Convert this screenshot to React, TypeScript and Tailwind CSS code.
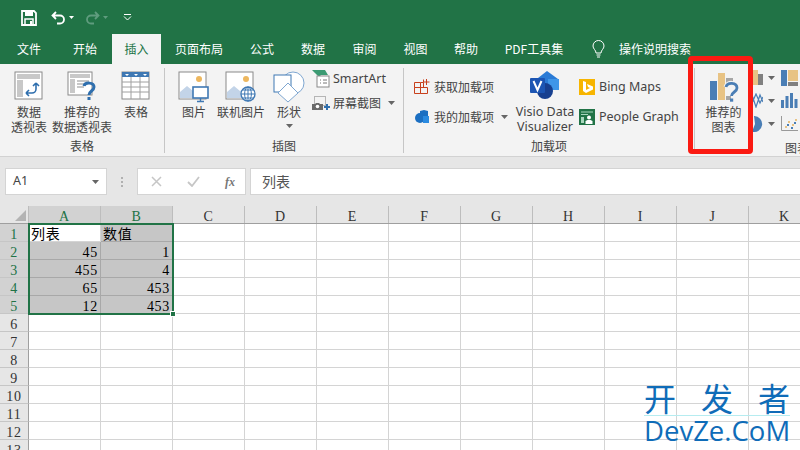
import type { ReactNode } from 'react';

const tabs = [
  { label: '文件', w: 'w-[58px]' },
  { label: '开始', w: 'w-[54px]' },
  { label: '插入', w: 'w-[49px]', active: true },
  { label: '页面布局', w: 'w-[76px]' },
  { label: '公式', w: 'w-[50px]' },
  { label: '数据', w: 'w-[52px]' },
  { label: '审阅', w: 'w-[51px]' },
  { label: '视图', w: 'w-[51px]' },
  { label: '帮助', w: 'w-[50px]' },
  { label: 'PDF工具集', w: 'w-[86px]' },
];

const columns = ['A', 'B', 'C', 'D', 'E', 'F', 'G', 'H', 'I', 'J', 'K'];

const rows: [string, string][] = [
  ['列表', '数值'],
  ['45', '1'],
  ['455', '4'],
  ['65', '453'],
  ['12', '453'],
];

function Caret({ className = '' }: { className?: string }) {
  return (
    <svg width="7" height="4" viewBox="0 0 7 4" className={className}>
      <path d="M0 0h7L3.500 4z" fill="#666" />
    </svg>
  );
}

function PivotIcon() {
  return (
    <svg width="30" height="30" viewBox="0 0 30 30">
      <rect x="1" y="1" width="27" height="27" fill="#fff" stroke="#8a8a8a" />
      <rect x="3" y="3" width="23" height="5" fill="#c8c8c8" />
      <rect x="3" y="9" width="6" height="17" fill="#c8c8c8" />
      <path d="M22 12v6a4 4 0 0 1-4 4h-6M12 22l3-3M12 22l3 3M22 12l-3 3M22 12l3 3" stroke="#2f6fae" strokeWidth="1.600" fill="none" />
    </svg>
  );
}

function RecommendPivotIcon() {
  return (
    <svg width="30" height="32" viewBox="0 0 30 32">
      <rect x="1" y="1" width="24" height="23" fill="#fff" stroke="#8a8a8a" />
      <rect x="3" y="3" width="20" height="4" fill="#c8c8c8" />
      <rect x="3" y="8" width="5" height="14" fill="#c8c8c8" />
      <path d="M10 10h12M10 13h9M10 16h7" stroke="#b5b5b5" strokeWidth="1.400" />
      <path d="M17 15c1-4 10-4 10 1 0 4-5 4-5 8" stroke="#2f6fae" strokeWidth="3" fill="none" />
      <rect x="20.500" y="26" width="3" height="3" fill="#2f6fae" />
    </svg>
  );
}

function TableIcon() {
  return (
    <svg width="30" height="30" viewBox="0 0 30 30">
      <rect x="1" y="1" width="27" height="27" fill="#fff" stroke="#8a8a8a" />
      <rect x="1" y="1" width="27" height="5" fill="#3f78b3" />
      <path d="M1 11h27M1 16h27M1 21h27M10 6v22M19 6v22" stroke="#a0a0a0" />
      <path d="M4 3h4l-2 2zM13 3h4l-2 2zM22 3h4l-2 2z" fill="#fff" />
    </svg>
  );
}

function PictureBase() {
  return (
    <>
      <rect x="1" y="1" width="27" height="27" fill="#fff" stroke="#8a8a8a" />
      <circle cx="21" cy="8" r="3" fill="#edb75f" />
      <path d="M2 27v-6l7-6 6 5 3-2 8 9z" fill="#c3d4e8" />
    </>
  );
}

function PictureIcon() {
  return (
    <svg width="32" height="32" viewBox="0 0 32 32">
      <PictureBase />
      <rect x="15" y="16" width="15" height="11" fill="#fff" stroke="#3f78b3" strokeWidth="1.600" />
      <path d="M22.500 27v3M19 30.500h7" stroke="#3f78b3" strokeWidth="1.400" />
    </svg>
  );
}

function OnlinePictureIcon() {
  return (
    <svg width="32" height="32" viewBox="0 0 32 32">
      <PictureBase />
      <circle cx="23" cy="23" r="7" fill="#fff" stroke="#3f78b3" strokeWidth="1.300" />
      <path d="M16 23h14M23 16v14M18 19h10M18 27h10" stroke="#3f78b3" />
      <ellipse cx="23" cy="23" rx="3.400" ry="7" fill="none" stroke="#3f78b3" />
    </svg>
  );
}

function ShapesIcon() {
  return (
    <svg width="32" height="32" viewBox="0 0 32 32">
      <circle cx="20" cy="12" r="11" fill="#fff" stroke="#7fa7d1" />
      <rect x="1" y="4" width="17" height="17" fill="#fff" stroke="#3f78b3" />
      <path d="M15 12l10 10-10 9-10-9z" fill="#fff" stroke="#7fa7d1" />
    </svg>
  );
}

function SmartArtIcon() {
  return (
    <svg width="18" height="18" viewBox="0 0 18 18">
      <path d="M0 0h13l3 5H9L7 7 3 3z" fill="#3c9a72" />
      <rect x="5" y="6" width="12" height="11" fill="#fff" stroke="#8a8a8a" />
      <path d="M8 10h1M11 10h4M8 13h1M11 13h4" stroke="#777" />
    </svg>
  );
}

function ScreenshotIcon() {
  return (
    <svg width="18" height="16" viewBox="0 0 18 16">
      <rect x="2.500" y="1.500" width="11" height="9" fill="none" stroke="#777" strokeDasharray="1 1" />
      <path d="M0 9h3l1-1h3l1 1h3v6H0z" fill="#6a6a6a" />
      <circle cx="5.500" cy="11.500" r="1.800" fill="#fff" />
      <path d="M15 9v6M12 12h6" stroke="#2f6fae" strokeWidth="2" />
    </svg>
  );
}

function StoreIcon() {
  return (
    <svg width="16" height="16" viewBox="0 0 16 16">
      <path d="M.5 3.500h6v5h-6zM.5 8.500h6v6h-6zM6.500 8.500h7v6h-7zM6.500 3.500h3V.5M9.500 8.500V3.500M12.500 0v6M9.500 3h6" fill="none" stroke="#c8401c" />
    </svg>
  );
}

function MyAddinIcon() {
  return (
    <svg width="15" height="14" viewBox="0 0 15 14">
      <path d="M5 1l4-1 4 1v5H5z" fill="#1b6fc2" />
      <circle cx="5" cy="8" r="5" fill="#1b6fc2" />
      <rect x="8" y="6" width="6" height="7" fill="#2a8ae0" />
    </svg>
  );
}

function VisioIcon() {
  return (
    <svg width="30" height="30" viewBox="0 0 30 30">
      <path d="M17 0l11 8v9H8V7z" fill="#2a7bd6" />
      <path d="M18 8h11v11H18z" fill="#3f96e8" />
      <circle cx="15" cy="20" r="8" fill="#173f8f" />
      <rect x="0" y="7" width="15" height="15" rx="1" fill="#1c55b3" />
      <path d="M3.500 10l4 9 4-9" fill="none" stroke="#fff" strokeWidth="2" />
    </svg>
  );
}

function BingIcon() {
  return (
    <svg width="16" height="16" viewBox="0 0 16 16">
      <rect width="16" height="16" fill="#f7b500" />
      <path d="M4 2l3 1v8l4-2-2-1-1-3 6 2.500v3L7 14l-3-2z" fill="#fff" />
    </svg>
  );
}

function PeopleGraphIcon() {
  return (
    <svg width="16" height="16" viewBox="0 0 16 16">
      <rect width="16" height="16" fill="#217346" />
      <path d="M2 3h12M2 5.500h7" stroke="#a9d6bd" />
      <circle cx="10" cy="8.500" r="2" fill="#fff" />
      <path d="M6.500 15v-3l2-1h3l2 1v3z" fill="#fff" />
      <rect x="2" y="8" width="3" height="6" fill="#a9d6bd" />
    </svg>
  );
}

function RecommendChartIcon() {
  return (
    <svg width="29" height="30" viewBox="0 0 29 30">
      <rect x="0" y="8" width="7" height="19" fill="#4a7eb5" />
      <rect x="8" y="0" width="7" height="27" fill="#e8c384" />
      <rect x="16" y="5" width="7" height="5" fill="#a6a6a6" />
      <rect x="16" y="23" width="5" height="4" fill="#a6a6a6" />
      <path d="M16 14c1-5 11-5 11 1 0 4-5.500 4-5.500 8" stroke="#f3f3f3" strokeWidth="5" fill="none" />
      <path d="M16 14c1-5 11-5 11 1 0 4-5.500 4-5.500 8" stroke="#4a7eb5" strokeWidth="2.800" fill="none" />
      <rect x="20" y="25.500" width="3.200" height="3.200" fill="#4a7eb5" />
    </svg>
  );
}

function ColumnChartIcon() {
  return (
    <svg width="11" height="15" viewBox="0 0 11 15">
      <rect x="1" y="0" width="5" height="15" fill="#e8c384" />
      <rect x="6" y="4" width="5" height="11" fill="#808080" />
    </svg>
  );
}

function TreemapIcon() {
  return (
    <svg width="17" height="16" viewBox="0 0 17 16">
      <rect width="6" height="16" fill="#4a7eb5" />
      <rect x="7" width="10" height="11" fill="#e8c384" />
      <rect x="7" y="12" width="10" height="4" fill="#808080" />
    </svg>
  );
}

function LineChartIcon() {
  return (
    <svg width="11" height="15" viewBox="0 0 11 15">
      <path d="M0 10l4-9 4 9 3-6M0 2l4 12 4-12 3 7" stroke="#4a7eb5" strokeWidth="1.200" fill="none" />
    </svg>
  );
}

function BarsIcon() {
  return (
    <svg width="17" height="15" viewBox="0 0 17 15">
      <path d="M0 7h3v8H0zM4.500 3h3v12h-3zM9 0h3v15H9zM13.500 6h3v9h-3z" fill="#4a7eb5" />
    </svg>
  );
}

function PieIcon() {
  return (
    <svg width="11" height="16" viewBox="0 0 11 16">
      <path d="M2 0a8 8 0 1 1-2 15.700L3 8z" fill="#4a7eb5" />
    </svg>
  );
}

function ScatterIcon() {
  return (
    <svg width="17" height="15" viewBox="0 0 17 15">
      <path d="M.5 0v14.500H17" stroke="#999" fill="none" />
      <path d="M4 10h2v2H4zM7 5h2v2H7zM11 8h2v2h-2zM14 3h2v2h-2z" fill="#e8c384" />
      <path d="M6 8h2v2H6zM10 11h2v2h-2zM13 6h2v2h-2z" fill="#4a7eb5" />
    </svg>
  );
}

function BigButton({ icon, lines, w }: { icon: ReactNode; lines: string[]; w: string }) {
  return (
    <div className={`${w} flex flex-col items-center shrink-0`}>
      <div className="h-[33px] flex items-start justify-center">{icon}</div>
      <div className="leading-[15px] text-[#444] whitespace-nowrap">
        {lines.map((l) => (
          <div key={l} className="text-center">{l}</div>
        ))}
      </div>
    </div>
  );
}

function Group({ label, w, children }: { label: string; w: string; children: ReactNode }) {
  return (
    <div className={`${w} shrink-0 h-[85px] border-r border-[#c6c6c6] flex flex-col`}>
      <div className="h-[66px] flex pt-[3px]">{children}</div>
      <div className="h-[19px] pt-[4px] text-center leading-[15px] text-[#444] whitespace-nowrap">{label}</div>
    </div>
  );
}

function SmallButton({ icon, label, caret, latin }: { icon: ReactNode; label: string; caret?: boolean; latin?: boolean }) {
  return (
    <div className={`flex items-center h-[22px] gap-[3px] text-[#444] whitespace-nowrap ${latin ? "font-['Noto_Sans',sans-serif] text-[12.5px]" : ''}`}>
      <span className="w-[18px] flex justify-center">{icon}</span>
      <span>{label}</span>
      {caret && <Caret className="ml-[4px]" />}
    </div>
  );
}

export default function App() {
  return (
    <div className="relative w-[800px] h-[450px] overflow-hidden bg-white flex flex-col text-[12px] font-['Noto_Sans_CJK_SC',sans-serif]">
      {/* title bar */}
      <div className="h-[34px] shrink-0 bg-[#217346] flex items-center pl-[21px] pt-[1px]">
        <svg width="16" height="16" viewBox="0 0 16 16">
          <path d="M1 1h12l2 2v12H1z" fill="none" stroke="#fff" strokeWidth="1.800" />
          <rect x="4" y="1" width="8" height="5" fill="#fff" />
          <rect x="4" y="9" width="8" height="6" fill="none" stroke="#fff" strokeWidth="1.500" />
          <rect x="9" y="11" width="2" height="4" fill="#fff" />
        </svg>
        <svg width="15" height="14" viewBox="0 0 15 14" className="ml-[14px]">
          <path d="M5 1L1.500 4.500 5 8M2 4.500h7a4 4 0 0 1 0 8H6" fill="none" stroke="#fff" strokeWidth="1.800" />
        </svg>
        <svg width="5" height="3" viewBox="0 0 5 3" className="ml-[3px]"><path d="M0 0h5L2.500 3z" fill="#fff" /></svg>
        <svg width="15" height="14" viewBox="0 0 15 14" className="ml-[11px]">
          <path d="M10 1l3.500 3.500L10 8M13 4.500H6a4 4 0 0 0 0 8h3" fill="none" stroke="#5f9c7e" strokeWidth="1.800" />
        </svg>
        <svg width="5" height="3" viewBox="0 0 5 3" className="ml-[3px]"><path d="M0 0h5L2.500 3z" fill="#5f9c7e" /></svg>
        <svg width="9" height="7" viewBox="0 0 9 7" className="ml-[15px]">
          <path d="M1 .5h7M1 2.500l3.500 3.500L8 2.500" fill="none" stroke="#fff" />
        </svg>
      </div>

      {/* tabs */}
      <div className="h-[30px] shrink-0 bg-[#217346] flex items-stretch text-white">
        {tabs.map((t) => (
          <div
            key={t.label}
            className={`${t.w} flex items-center justify-center whitespace-nowrap ${t.active ? 'bg-[#f3f3f3] text-[#217346]' : ''}`}
          >
            {t.label}
          </div>
        ))}
        <div className="ml-[15px] flex items-center gap-[14px]">
          <svg width="13" height="18" viewBox="0 0 13 18">
            <path d="M4 13c0-3-3-4-3-7a5.500 5.500 0 0 1 11 0c0 3-3 4-3 7z" fill="none" stroke="#fff" />
            <path d="M4.500 15h4M5 17h3" stroke="#fff" />
          </svg>
          <span>操作说明搜索</span>
        </div>
      </div>

      {/* ribbon */}
      <div className="h-[93px] shrink-0 bg-[#f3f3f3] border-b border-[#d2d2d2] flex pt-[4px]">
        <Group label="表格" w="w-[165px]">
          <BigButton w="w-[58px]" icon={<PivotIcon />} lines={['数据', '透视表']} />
          <BigButton w="w-[48px]" icon={<RecommendPivotIcon />} lines={['推荐的', '数据透视表']} />
          <BigButton w="w-[60px]" icon={<TableIcon />} lines={['表格']} />
        </Group>
        <Group label="插图" w="w-[239px]">
          <BigButton w="w-[58px]" icon={<PictureIcon />} lines={['图片']} />
          <BigButton w="w-[36px]" icon={<OnlinePictureIcon />} lines={['联机图片']} />
          <div className="w-[60px] flex flex-col items-center shrink-0">
            <div className="h-[33px]"><ShapesIcon /></div>
            <div className="leading-[15px] text-[#444]">形状</div>
            <Caret className="mt-[5px]" />
          </div>
          <div className="flex flex-col -ml-[7px] -mt-[3px] gap-[2px]">
            <SmallButton icon={<SmartArtIcon />} label="SmartArt" latin />
            <SmallButton icon={<ScreenshotIcon />} label="屏幕截图" caret />
          </div>
        </Group>
        <Group label="加载项" w="w-[291px]">
          <div className="w-[108px] pl-[9px] pt-[5px] flex flex-col gap-[8px] shrink-0">
            <SmallButton icon={<StoreIcon />} label="获取加载项" />
            <SmallButton icon={<MyAddinIcon />} label="我的加载项" caret />
          </div>
          <div className="w-[66px] flex flex-col items-center shrink-0">
            <div className="h-[33px]"><VisioIcon /></div>
            <div className="text-[12.5px] leading-[15px] text-[#444] text-center whitespace-nowrap font-['Noto_Sans',sans-serif]">
              Visio Data<br />Visualizer
            </div>
          </div>
          <div className="flex flex-col pt-[5px] gap-[8px]">
            <SmallButton icon={<BingIcon />} label="Bing Maps" latin />
            <SmallButton icon={<PeopleGraphIcon />} label="People Graph" latin />
          </div>
        </Group>
        <div className="flex-1 flex min-w-0">
          <div className="w-[57px] shrink-0 flex flex-col items-center pt-[5px]">
            <div className="h-[31px] pl-[1px]"><RecommendChartIcon /></div>
            <div className="leading-[15px] text-[#444] text-center whitespace-nowrap">推荐的<br />图表</div>
          </div>
          <div className="w-[48px] shrink-0 flex flex-col pt-[2px]">
            <div className="grid grid-cols-[29px_19px] grid-rows-[23px_23px_23px] h-[69px]">
              <div className="flex items-start gap-[5px]"><ColumnChartIcon /><Caret className="mt-[6px]" /></div>
              <TreemapIcon />
              <div className="flex items-start gap-[5px]"><LineChartIcon /><Caret className="mt-[6px]" /></div>
              <BarsIcon />
              <div className="flex items-start gap-[5px]"><PieIcon /><Caret className="mt-[6px]" /></div>
              <ScatterIcon />
            </div>
            <div className="pl-[33px] pt-[1px] leading-[15px] text-[#444] whitespace-nowrap">图表</div>
          </div>
        </div>
      </div>

      {/* formula bar */}
      <div className="h-[49px] shrink-0 bg-[#e6e6e6] flex pt-[11px] pl-[5px]">
        <div className="w-[102px] h-[27px] bg-white border border-[#d4d4d4] flex items-center justify-between px-[7px] text-[12.5px] text-[#444] font-['Noto_Sans',sans-serif]">
          A1
          <Caret />
        </div>
        <div className="w-[30px] h-[27px] flex items-center justify-center flex-col gap-[2px]">
          <span className="w-[2px] h-[2px] bg-[#b0b0b0]" />
          <span className="w-[2px] h-[2px] bg-[#b0b0b0]" />
          <span className="w-[2px] h-[2px] bg-[#b0b0b0]" />
        </div>
        <div className="w-[109px] h-[27px] bg-white border border-[#d4d4d4] flex items-center pl-[13px] gap-[25px]">
          <svg width="11" height="11" viewBox="0 0 11 11"><path d="M1 1l9 9M10 1l-9 9" stroke="#c6c6c6" strokeWidth="1.500" /></svg>
          <svg width="13" height="11" viewBox="0 0 13 11"><path d="M1 6l4 4 7-9" stroke="#c6c6c6" strokeWidth="1.800" fill="none" /></svg>
          <span className="italic font-bold text-[#777] font-['Liberation_Serif',serif]">fx</span>
        </div>
        <div className="ml-[4px] flex-1 h-[27px] bg-white border-y border-l border-[#d4d4d4] flex items-center pl-[11px] text-[14px] text-[#555]">列表</div>
      </div>

      {/* sheet */}
      <div className="relative flex-1 min-h-0 overflow-hidden text-[14px] leading-[21px] tracking-[0.7px] font-['Liberation_Serif','Noto_Sans_CJK_SC',serif]">
        <div className="h-[18px] flex bg-[#e6e6e6] border-b border-[#9f9f9f] text-[#333]">
          <div className="w-[29px] shrink-0 border-r border-[#bdbdbd] flex items-end justify-end p-[2px]">
            <svg width="11" height="11" viewBox="0 0 11 11"><path d="M11 0v11H0z" fill="#b4b4b4" /></svg>
          </div>
          {columns.map((c, i) => (
            <div
              key={c}
              className={`w-[72px] shrink-0 text-center border-r border-[#bdbdbd] ${i < 2 ? 'bg-[#d2d2d2] text-[#217346]' : ''}`}
            >
              {c}
            </div>
          ))}
        </div>
        {Array.from({ length: 13 }, (_, r) => (
          <div key={r} className="h-[18px] flex text-black">
            <div className={`w-[29px] shrink-0 text-center border-r border-b border-r-[#9f9f9f] border-b-[#c6c6c6] ${r < 5 ? 'bg-[#d2d2d2] text-[#217346]' : 'bg-[#e6e6e6] text-[#333]'}`}>
              {r + 1}
            </div>
            {columns.map((c, i) => {
              const value = r < 5 && i < 2 ? rows[r][i] : '';
              const selected = r < 5 && i < 2 && !(r === 0 && i === 0);
              return (
                <div
                  key={c}
                  className={`w-[72px] shrink-0 border-r border-b px-[2px] whitespace-nowrap ${r === 0 ? 'text-left' : 'text-right'} ${selected ? 'bg-[#c6c6c6] border-[#a8a8a8]' : 'border-[#d4d4d4]'}`}
                >
                  {value}
                </div>
              );
            })}
          </div>
        ))}
        {/* selection */}
        <div className="absolute left-[28px] top-[17px] w-[146px] h-[92px] border-2 border-[#217346]" />
        <div className="absolute left-[170px] top-[105px] w-[4px] h-[4px] bg-[#217346] border border-white box-content" />
      </div>

      {/* red highlight */}
      <div className="absolute left-[688px] top-[56px] w-[65px] h-[98px] border-[5px] border-[#fb1a12] rounded-[4px]" />

      {/* watermark */}
      <div className="absolute left-[644px] top-[379px] w-[146px] text-[#0f6cb8]">
        <div className="flex justify-between text-[32px] leading-[36px]">
          <span>开</span>
          <span>发</span>
          <span>者</span>
        </div>
        <div className="h-px bg-[#b6ecf0]" />
        <div className="text-[27.5px] leading-[30px] whitespace-nowrap font-['Open_Sans',sans-serif]">DevZe.CoM</div>
      </div>
    </div>
  );
}
